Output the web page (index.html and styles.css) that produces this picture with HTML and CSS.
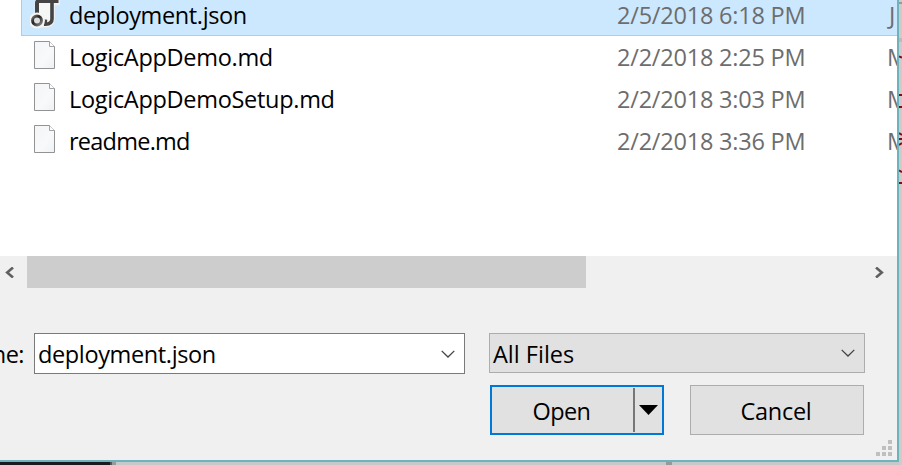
FILE: index.html
```html
<!DOCTYPE html>
<html lang="en">
<head>
<meta charset="utf-8">
<title>Open</title>
<link rel="stylesheet" href="styles.css">
</head>
<body>
<svg width="0" height="0" class="defs">
  <defs>
    <linearGradient id="paper" x1="0" y1="0" x2="1" y2="1"><stop offset="0" stop-color="#f3f5f7"/><stop offset=".6" stop-color="#f8f9fa"/><stop offset="1" stop-color="#eef1f3"/></linearGradient>
    <linearGradient id="ring" x1="0" y1="0" x2="1" y2="1"><stop offset="0" stop-color="#777"/><stop offset=".4" stop-color="#222"/><stop offset="1" stop-color="#888"/></linearGradient>
    <symbol id="page" viewBox="0 0 22 28"><path d="M.5.5H15.5L20.5 5.5V27.500H.5Z" fill="url(#paper)" stroke="#929394"/><path d="M15.500.5V5.500H20.500" fill="#fff" stroke="#a0a1a2"/></symbol>
    <symbol id="chev" viewBox="0 0 14 8"><path d="M.7.9L7 7L13.300.9" fill="none" stroke="#444" stroke-width="1.300"/></symbol>
  </defs>
</svg>
<div class="dialog">
  <div class="list">
    <div class="row selected">
      <span class="icon"><svg class="json" width="32" height="30" viewBox="0 0 32 30">
        <path d="M6 15V3Q6 0 10 0H28.500V5H23.500V20Q23 27 17 27H8" fill="#f5f6f6" stroke="#f3f2f0" stroke-width="2.500"/>
        <path d="M7 14V4Q7 2 9 2H28.500" fill="none" stroke="#444" stroke-width="4"/>
        <path d="M22 2V20Q22 25 15.500 25.200Q15 23 15.500 20.500" fill="none" stroke="#444" stroke-width="3.600"/>
        <circle cx="7" cy="21.500" r="8" fill="#f5f5f5"/>
        <circle cx="7" cy="21.500" r="4.500" fill="#ddd" stroke="url(#ring)" stroke-width="3"/>
      </svg></span>
      <span class="name n1">deployment.json</span><span class="date">2/5/2018 6:18 PM</span><span class="type">J</span>
    </div>
    <div class="row"><span class="icon"><svg class="page" width="22" height="28"><use href="#page"/></svg></span><span class="name n2">LogicAppDemo.md</span><span class="date">2/2/2018 2:25 PM</span><span class="type">M</span></div>
    <div class="row"><span class="icon"><svg class="page" width="22" height="28"><use href="#page"/></svg></span><span class="name n3">LogicAppDemoSetup.md</span><span class="date">2/2/2018 3:03 PM</span><span class="type">M</span></div>
    <div class="row"><span class="icon"><svg class="page" width="22" height="28"><use href="#page"/></svg></span><span class="name n4">readme.md</span><span class="date">2/2/2018 3:36 PM</span><span class="type">M</span></div>
  </div>
  <div class="scrollbar">
    <svg class="arrow" width="9" height="11" viewBox="0 0 9 11"><path d="M8 .5L2.200 5.500L8 10.500" fill="none" stroke="#606060" stroke-width="2.600"/></svg>
    <div class="thumb"></div>
    <svg class="arrow right" width="9" height="11" viewBox="0 0 9 11"><path d="M1 .5L6.800 5.500L1 10.500" fill="none" stroke="#606060" stroke-width="2.600"/></svg>
  </div>
  <div class="fields">
    <div class="label">ne:</div>
    <div class="combo input"><span class="n1">deployment.json</span><svg width="14" height="8"><use href="#chev"/></svg></div>
    <div class="combo select"><span class="all">All Files</span><svg width="14" height="8"><use href="#chev"/></svg></div>
  </div>
  <div class="buttons">
    <div class="button open"><span class="open-text">Open</span><div class="split"><svg width="19" height="10" viewBox="0 0 19 10"><path d="M0 0H19L9.500 10Z"/></svg></div></div>
    <div class="button cancel">Cancel</div>
  </div>
  <svg class="grip" width="16" height="16" viewBox="0 0 16 16"><path d="M12 0h4v4h-4zM6 6h4v4H6zM12 6h4v4h-4zM0 12h4v4H0zM6 12h4v4H6zM12 12h4v4h-4z" fill="#bfbfbf"/></svg>
</div>
<svg class="behind" width="3" height="465" viewBox="0 0 3 465">
  <path d="M0 3H3" stroke="#999" stroke-width="2"/><path d="M0 40H3" stroke="#bbb" stroke-width="4"/>
  <path d="M0 56.500L3 57.500M0 95H3M0 107H3M0 133L3 135M0 139H3M0 145L3 143M0 170.500L3 172M0 183H3" stroke="#850d12" stroke-width="2"/>
</svg>
<div class="under"><div class="dark"></div><div class="edge"></div><div class="light"></div><div class="tick"></div></div>
</body>
</html>
```
FILE: styles.css
```css
* { box-sizing: border-box; }
body { margin: 0; width: 902px; height: 465px; overflow: hidden; display: grid; grid-template-columns: 899px 3px; grid-template-rows: 462px 3px; background: #c9c8c8; font: 23.5px "Open Sans", "Noto Sans", sans-serif; font-weight: 370; color: #000; white-space: nowrap; }
.defs { position: absolute; }
.dialog { position: relative; width: 899px; height: 462px; background: #f0f0f0; border-right: 2px solid #6cb3bd; border-bottom: 2px solid #6cb3bd; overflow: hidden; }
.list { height: 256px; background: #fff; overflow: hidden; padding-left: 21px; }
.row { display: grid; grid-template-columns: 47px 548px 270px 1fr; height: 42px; line-height: 42px; border: 1px solid transparent; border-width: 0 0 1px 1px; }
.row.selected { margin-top: -6px; background: #cce8ff; border-color: #99d1ff; }
.row.selected .type { padding-left: 2px; }
.icon svg { display: block; }
.page { margin: 5px 0 0 12px; }
.json { margin: 5px 0 0 8px; }
.date, .type { color: #6d6d6d; }
.type { min-width: 0; }
.date { letter-spacing: -.21px; }
.n1 { letter-spacing: -.37px; }
.n2, .n3 { letter-spacing: -.3px; }
.n4 { letter-spacing: -.75px; }
.scrollbar { height: 32px; display: flex; align-items: center; padding: 0 13px 0 5px; }
.thumb { width: 559px; height: 32px; margin-left: 13px; background: #cdcdcd; }
.right { margin-left: auto; }
.fields { display: flex; margin-top: 45px; height: 41px; line-height: 41px; }
.label { width: 24px; margin-right: 10px; padding-top: 1px; display: flex; justify-content: flex-end; letter-spacing: -.5px; }
.combo { display: flex; justify-content: space-between; align-items: center; border: 1px solid #7a7a7a; }
.input { width: 431px; height: 41px; background: #fff; padding: 2px 9px 0 3px; }
.select { width: 376px; height: 40px; margin-left: 24px; background: #e1e1e1; border-color: #adadad; padding: 2px 9px 0 3px; }
.combo svg { margin-top: -2px; }
.all { letter-spacing: 0; }
.buttons { display: flex; margin-top: 11px; padding-left: 490px; gap: 26px; }
.button { width: 174px; height: 50px; background: #e1e1e1; border: 1px solid #adadad; display: flex; align-items: center; justify-content: center; padding-top: 2px; }
.open { border: 2px solid #0078d7; padding: 0; }
.open-text { flex: 1; text-align: center; padding: 2px 2px 0 0; letter-spacing: -.6px; }
.cancel { letter-spacing: -.3px; padding-right: 2px; }
.split { width: 29px; height: 44px; border-left: 2px solid #777; display: flex; align-items: center; justify-content: center; }
.grip { position: absolute; right: 5px; bottom: 4px; }
.behind { grid-column: 2; grid-row: 1 / 3; background: #cecccb; }
.under { grid-column: 1; grid-row: 2; display: flex; }
.dark { width: 110px; background: #1c1a1e; }
.edge { width: 6px; background: #999; border-left: 2px solid #555; }
.light { width: 550px; background: #c9c8c8; }
.tick { width: 6px; background: #999; }
```
